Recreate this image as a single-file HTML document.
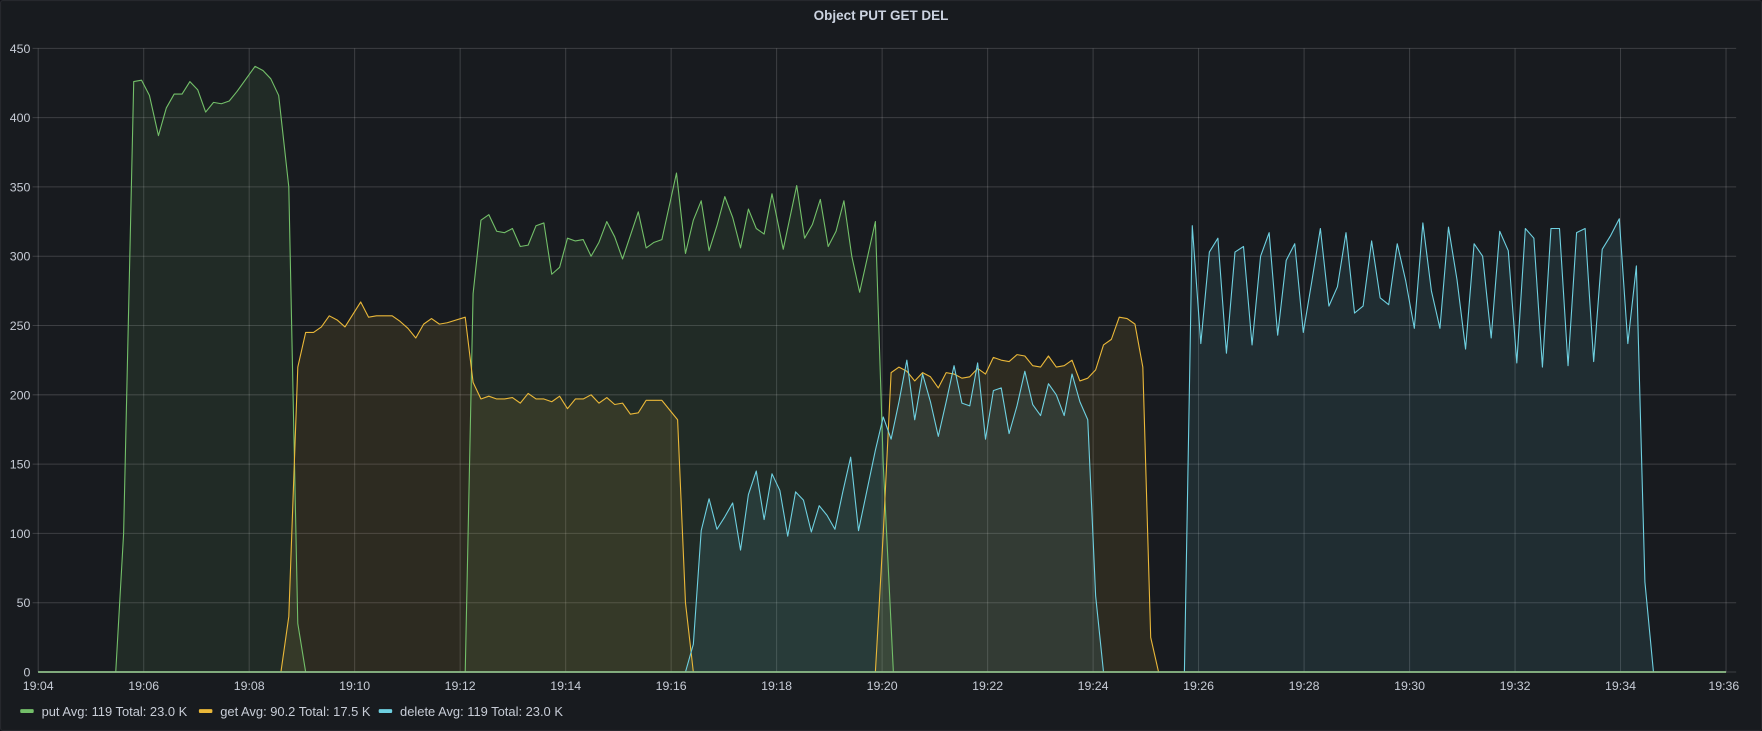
<!DOCTYPE html>
<html><head><meta charset="utf-8"><style>
html,body{margin:0;padding:0;background:#111217;}
body{width:1762px;height:731px;overflow:hidden;}
svg{display:block;}
text{font-family:"Liberation Sans",sans-serif;}
</style></head><body>
<svg width="1762" height="731" viewBox="0 0 1568 650.5" preserveAspectRatio="none">
<rect x="0.5" y="0.5" width="1567" height="649.5" rx="2" fill="#181b1f" stroke="#26282d"/>
<text x="784" y="18" text-anchor="middle" font-size="12" font-weight="bold" fill="#ccd3e0">Object PUT GET DEL</text>
<g stroke="#ffffff" stroke-opacity="0.16" stroke-width="0.9">
<line x1="29" x2="1545" y1="43" y2="43"/><line x1="29" x2="1545" y1="104.67" y2="104.67"/><line x1="29" x2="1545" y1="166.33" y2="166.33"/><line x1="29" x2="1545" y1="228" y2="228"/><line x1="29" x2="1545" y1="289.67" y2="289.67"/><line x1="29" x2="1545" y1="351.33" y2="351.33"/><line x1="29" x2="1545" y1="413" y2="413"/><line x1="29" x2="1545" y1="474.67" y2="474.67"/><line x1="29" x2="1545" y1="536.33" y2="536.33"/>
<line y1="43" y2="598" x1="34" x2="34"/><line y1="43" y2="598" x1="127.9" x2="127.9"/><line y1="43" y2="598" x1="221.75" x2="221.75"/><line y1="43" y2="598" x1="315.6" x2="315.6"/><line y1="43" y2="598" x1="409.5" x2="409.5"/><line y1="43" y2="598" x1="503.4" x2="503.4"/><line y1="43" y2="598" x1="597.25" x2="597.25"/><line y1="43" y2="598" x1="691.1" x2="691.1"/><line y1="43" y2="598" x1="785" x2="785"/><line y1="43" y2="598" x1="878.9" x2="878.9"/><line y1="43" y2="598" x1="972.75" x2="972.75"/><line y1="43" y2="598" x1="1066.6" x2="1066.6"/><line y1="43" y2="598" x1="1160.5" x2="1160.5"/><line y1="43" y2="598" x1="1254.4" x2="1254.4"/><line y1="43" y2="598" x1="1348.25" x2="1348.25"/><line y1="43" y2="598" x1="1442.1" x2="1442.1"/><line y1="43" y2="598" x1="1536" x2="1536"/>
</g>
<g font-size="11" fill="#c7ccd6" text-anchor="end">
<text x="27" y="47">450</text><text x="27" y="108.7">400</text><text x="27" y="170.3">350</text><text x="27" y="232">300</text><text x="27" y="293.7">250</text><text x="27" y="355.3">200</text><text x="27" y="417">150</text><text x="27" y="478.7">100</text><text x="27" y="540.3">50</text><text x="27" y="602">0</text>
</g>
<g font-size="11" fill="#c7ccd6" text-anchor="middle">
<text x="34" y="614">19:04</text><text x="127.9" y="614">19:06</text><text x="221.75" y="614">19:08</text><text x="315.6" y="614">19:10</text><text x="409.5" y="614">19:12</text><text x="503.4" y="614">19:14</text><text x="597.25" y="614">19:16</text><text x="691.1" y="614">19:18</text><text x="785" y="614">19:20</text><text x="878.9" y="614">19:22</text><text x="972.75" y="614">19:24</text><text x="1066.6" y="614">19:26</text><text x="1160.5" y="614">19:28</text><text x="1254.4" y="614">19:30</text><text x="1348.25" y="614">19:32</text><text x="1442.1" y="614">19:34</text><text x="1534" y="614">19:36</text>
</g>
<g transform="translate(0,598) scale(1,-1.23333)" stroke-width="1.1" stroke-linejoin="round">
<polygon fill="#73bf69" fill-opacity="0.1" stroke="none" points="34,0 103,0 110,100 119,426 126,427 133,416 141,387 148,407 155,417 162,417 169,426 176,420 183,404 190,411 197,410 204,412 211,419 227,437 234,434 241,428 248,416 257,350 265,35 272,0 414,0 421,273 428,326 435,330 442,318 449,317 456,320 463,307 470,308 477,322 484,324 491,287 498,292 505,313 512,311 519,312 526,300 533,310 540,325 547,314 554,298 561,315 568,332 575,306 582,310 589,312 602,360 610,302 617,326 624,340 631,304 638,322 645,343 652,328 659,306 666,334 673,320 680,316 687,345 697,305 709,351 716,313 723,323 730,341 737,307 744,318 751,340 758,300 765,274 779,325 786,150 795,0 1536,0"/>
<polygon fill="#eab839" fill-opacity="0.1" stroke="none" points="34,0 250,0 257,40 265,220 272,245 279,245 286,249 293,257 300,254 307,249 321,267 328,256 335,257 342,257 349,257 356,253 363,248 370,241 377,251 384,255 391,251 398,252 414,256 421,209 428,197 435,199 442,197 449,197 456,198 463,194 470,201 477,197 484,197 491,195 498,199 505,190 512,197 519,197 526,200 533,194 540,198 547,193 554,194 561,186 568,187 575,196 589,196 603,182 610,50 617,0 779,0 786,100 793,216 800,220 807,217 814,210 821,216 828,213 835,205 842,216 849,215 856,212 863,213 870,219 877,215 884,227 891,225 898,224 905,229 912,228 919,221 926,220 933,228 940,220 947,221 954,225 961,210 968,212 975,218 982,236 989,240 996,256 1003,255 1010,251 1017,220 1024,25 1031,0 1536,0"/>
<polygon fill="#6ed0e0" fill-opacity="0.1" stroke="none" points="34,0 610,0 617,20 624,102 631,125 638,103 645,112 652,122 659,88 666,128 673,145 680,110 687,143 694,131 701,98 708,130 715,124 722,101 729,120 736,113 743,103 750,130 757,155 764,102 779,160 786,184 793,168 800,195 807,225 814,182 821,215 828,195 835,170 842,195 849,221 856,194 863,192 870,223 877,168 884,203 891,205 898,172 905,192 912,217 919,193 926,185 933,208 940,200 947,185 954,215 961,195 968,182 975,55 982,0 1054,0 1061,322 1068.6,237 1076.2,303 1083.8,313 1091.4,230 1099,303 1106.6,307 1114.2,236 1121.8,300 1129.4,317 1137,243 1144.6,297 1152.2,309 1159.8,245 1167.4,282 1175,320 1182.6,264 1190.2,278 1197.8,317 1205.4,259 1213,264 1220.6,311 1228.2,270 1235.8,265 1243.4,309 1251,282 1258.6,248 1266.2,324 1273.8,275 1281.4,248 1289,321 1296.6,283 1304.2,233 1311.8,309 1319.4,300 1327,241 1334.6,318 1342.2,304 1349.8,223 1357.4,320 1365,313 1372.6,220 1380.2,320 1387.8,320 1395.4,221 1403,317 1410.6,320 1418.2,224 1425.8,305 1433.4,315 1441,327 1448.6,237 1456.2,293 1463.8,65 1471.4,0 1536,0"/>
<polyline vector-effect="non-scaling-stroke" fill="none" stroke="#73bf69" points="34,0 103,0 110,100 119,426 126,427 133,416 141,387 148,407 155,417 162,417 169,426 176,420 183,404 190,411 197,410 204,412 211,419 227,437 234,434 241,428 248,416 257,350 265,35 272,0 414,0 421,273 428,326 435,330 442,318 449,317 456,320 463,307 470,308 477,322 484,324 491,287 498,292 505,313 512,311 519,312 526,300 533,310 540,325 547,314 554,298 561,315 568,332 575,306 582,310 589,312 602,360 610,302 617,326 624,340 631,304 638,322 645,343 652,328 659,306 666,334 673,320 680,316 687,345 697,305 709,351 716,313 723,323 730,341 737,307 744,318 751,340 758,300 765,274 779,325 786,150 795,0 1536,0"/>
<polyline vector-effect="non-scaling-stroke" fill="none" stroke="#eab839" points="34,0 250,0 257,40 265,220 272,245 279,245 286,249 293,257 300,254 307,249 321,267 328,256 335,257 342,257 349,257 356,253 363,248 370,241 377,251 384,255 391,251 398,252 414,256 421,209 428,197 435,199 442,197 449,197 456,198 463,194 470,201 477,197 484,197 491,195 498,199 505,190 512,197 519,197 526,200 533,194 540,198 547,193 554,194 561,186 568,187 575,196 589,196 603,182 610,50 617,0 779,0 786,100 793,216 800,220 807,217 814,210 821,216 828,213 835,205 842,216 849,215 856,212 863,213 870,219 877,215 884,227 891,225 898,224 905,229 912,228 919,221 926,220 933,228 940,220 947,221 954,225 961,210 968,212 975,218 982,236 989,240 996,256 1003,255 1010,251 1017,220 1024,25 1031,0 1536,0"/>
<polyline vector-effect="non-scaling-stroke" fill="none" stroke="#6ed0e0" points="34,0 610,0 617,20 624,102 631,125 638,103 645,112 652,122 659,88 666,128 673,145 680,110 687,143 694,131 701,98 708,130 715,124 722,101 729,120 736,113 743,103 750,130 757,155 764,102 779,160 786,184 793,168 800,195 807,225 814,182 821,215 828,195 835,170 842,195 849,221 856,194 863,192 870,223 877,168 884,203 891,205 898,172 905,192 912,217 919,193 926,185 933,208 940,200 947,185 954,215 961,195 968,182 975,55 982,0 1054,0 1061,322 1068.6,237 1076.2,303 1083.8,313 1091.4,230 1099,303 1106.6,307 1114.2,236 1121.8,300 1129.4,317 1137,243 1144.6,297 1152.2,309 1159.8,245 1167.4,282 1175,320 1182.6,264 1190.2,278 1197.8,317 1205.4,259 1213,264 1220.6,311 1228.2,270 1235.8,265 1243.4,309 1251,282 1258.6,248 1266.2,324 1273.8,275 1281.4,248 1289,321 1296.6,283 1304.2,233 1311.8,309 1319.4,300 1327,241 1334.6,318 1342.2,304 1349.8,223 1357.4,320 1365,313 1372.6,220 1380.2,320 1387.8,320 1395.4,221 1403,317 1410.6,320 1418.2,224 1425.8,305 1433.4,315 1441,327 1448.6,237 1456.2,293 1463.8,65 1471.4,0 1536,0"/>
</g>
<line x1="34" x2="1536" y1="598" y2="598" stroke="#8fbf8a" stroke-width="1.6"/>
<line x1="1536" x2="1545" y1="598" y2="598" stroke="#ffffff" stroke-opacity="0.16" stroke-width="0.9"/>
<g font-size="11.5" fill="#c7ccd6">
<rect x="18" y="631" width="12" height="3.5" rx="1" fill="#73bf69"/>
<text x="37" y="637">put  Avg: 119  Total: 23.0 K</text>
<rect x="177" y="631" width="12" height="3.5" rx="1" fill="#eab839"/>
<text x="196" y="637">get  Avg: 90.2  Total: 17.5 K</text>
<rect x="337" y="631" width="12" height="3.5" rx="1" fill="#6ed0e0"/>
<text x="356" y="637">delete  Avg: 119  Total: 23.0 K</text>
</g>
</svg>
</body></html>
